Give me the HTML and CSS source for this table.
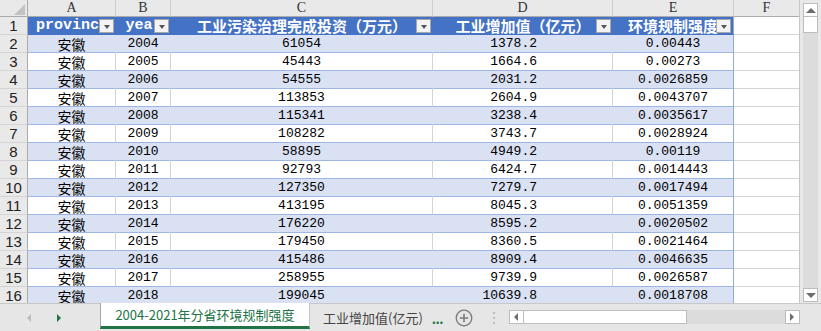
FILE: index.html
```html
<!DOCTYPE html>
<html lang="zh">
<head>
<meta charset="utf-8">
<title>Sheet</title>
<link rel="stylesheet" href="styles.css">
</head>
<body>
<div class="app">
  <div class="main">
    <div class="sheet">
      <div class="row colhead">
        <div class="corner"><span class="corner-tri"></span></div>
        <div class="ch">A</div><div class="ch">B</div><div class="ch">C</div><div class="ch">D</div><div class="ch">E</div><div class="ch">F</div>
      </div>
      <div class="row hdr">
        <div class="rh">1</div>
        <div class="th lat">province<span class="dd"></span></div>
        <div class="th lat">year<span class="dd"></span></div>
        <div class="th">工业污染治理完成投资（万元）<span class="dd"></span></div>
        <div class="th">工业增加值（亿元）<span class="dd"></span></div>
        <div class="th last">环境规制强度<span class="dd"></span></div>
        <div class="fc"></div>
      </div>
      <div class="row band"><div class="rh">2</div><div class="td cn">安徽</div><div class="td">2004</div><div class="td">61054</div><div class="td r">1378.2</div><div class="td last">0.00443</div><div class="fc"></div></div>
      <div class="row"><div class="rh">3</div><div class="td cn">安徽</div><div class="td">2005</div><div class="td">45443</div><div class="td r">1664.6</div><div class="td last">0.00273</div><div class="fc"></div></div>
      <div class="row band"><div class="rh">4</div><div class="td cn">安徽</div><div class="td">2006</div><div class="td">54555</div><div class="td r">2031.2</div><div class="td last">0.0026859</div><div class="fc"></div></div>
      <div class="row"><div class="rh">5</div><div class="td cn">安徽</div><div class="td">2007</div><div class="td">113853</div><div class="td r">2604.9</div><div class="td last">0.0043707</div><div class="fc"></div></div>
      <div class="row band"><div class="rh">6</div><div class="td cn">安徽</div><div class="td">2008</div><div class="td">115341</div><div class="td r">3238.4</div><div class="td last">0.0035617</div><div class="fc"></div></div>
      <div class="row"><div class="rh">7</div><div class="td cn">安徽</div><div class="td">2009</div><div class="td">108282</div><div class="td r">3743.7</div><div class="td last">0.0028924</div><div class="fc"></div></div>
      <div class="row band"><div class="rh">8</div><div class="td cn">安徽</div><div class="td">2010</div><div class="td">58895</div><div class="td r">4949.2</div><div class="td last">0.00119</div><div class="fc"></div></div>
      <div class="row"><div class="rh">9</div><div class="td cn">安徽</div><div class="td">2011</div><div class="td">92793</div><div class="td r">6424.7</div><div class="td last">0.0014443</div><div class="fc"></div></div>
      <div class="row band"><div class="rh">10</div><div class="td cn">安徽</div><div class="td">2012</div><div class="td">127350</div><div class="td r">7279.7</div><div class="td last">0.0017494</div><div class="fc"></div></div>
      <div class="row"><div class="rh">11</div><div class="td cn">安徽</div><div class="td">2013</div><div class="td">413195</div><div class="td r">8045.3</div><div class="td last">0.0051359</div><div class="fc"></div></div>
      <div class="row band"><div class="rh">12</div><div class="td cn">安徽</div><div class="td">2014</div><div class="td">176220</div><div class="td r">8595.2</div><div class="td last">0.0020502</div><div class="fc"></div></div>
      <div class="row"><div class="rh">13</div><div class="td cn">安徽</div><div class="td">2015</div><div class="td">179450</div><div class="td r">8360.5</div><div class="td last">0.0021464</div><div class="fc"></div></div>
      <div class="row band"><div class="rh">14</div><div class="td cn">安徽</div><div class="td">2016</div><div class="td">415486</div><div class="td r">8909.4</div><div class="td last">0.0046635</div><div class="fc"></div></div>
      <div class="row"><div class="rh">15</div><div class="td cn">安徽</div><div class="td">2017</div><div class="td">258955</div><div class="td r">9739.9</div><div class="td last">0.0026587</div><div class="fc"></div></div>
      <div class="row band"><div class="rh">16</div><div class="td cn">安徽</div><div class="td">2018</div><div class="td">199045</div><div class="td r">10639.8</div><div class="td last">0.0018708</div><div class="fc"></div></div>
    </div>
    <div class="vscroll">
      <div class="vtrack">
        <div class="sbtn up"><span class="tri-up"></span></div>
        <div class="vthumb"></div>
        <div class="vspace"></div>
        <div class="sbtn down"><span class="tri-down"></span></div>
      </div>
    </div>
  </div>
  <div class="tabbar">
    <div class="navs">
      <span class="nav-l"></span>
      <span class="nav-r"></span>
    </div>
    <div class="tab active">2004-2021年分省环境规制强度</div>
    <div class="tab">工业增加值(亿元)</div>
    <div class="more">...</div>
    <div class="addsheet">
      <svg width="18" height="18" viewBox="0 0 18 18"><circle cx="9" cy="9" r="7.8" fill="none" stroke="#7a7a7a" stroke-width="1.3"/><path d="M9 4.8v8.4M4.8 9h8.4" stroke="#7a7a7a" stroke-width="1.6"/></svg>
    </div>
    <div class="vdots"><span></span><span></span><span></span></div>
    <div class="hscroll">
      <div class="sbtn left"><span class="tri-left"></span></div>
      <div class="hthumb"></div>
      <div class="hspace"></div>
      <div class="sbtn right"><span class="tri-right"></span></div>
    </div>
  </div>
</div>
</body>
</html>
```
FILE: styles.css
```css
* { box-sizing: border-box; }
html, body { margin: 0; padding: 0; }
body {
  width: 821px;
  height: 331px;
  overflow: hidden;
  background: #e6e6e6;
  font-family: "Liberation Mono", "Noto Sans CJK SC", monospace;
}
.app {
  width: 821px;
  height: 331px;
  display: flex;
  flex-direction: column;
}
.main {
  height: 303px;
  display: flex;
  flex: 0 0 303px;
}
.sheet {
  width: 800px;
  height: 303px;
  overflow: hidden;
  background: #fff;
  display: flex;
  flex-direction: column;
  border-right: 1px solid #c6c6c6;
}
.row {
  display: grid;
  grid-template-columns: 28px 88px 55px 262px 180px 121px 66px;
  height: 18px;
  flex: 0 0 18px;
  line-height: 1;
}
.row > div {
  display: flex;
  align-items: center;
  justify-content: center;
  white-space: nowrap;
  position: relative;
  line-height: 1;
}
.colhead { height: 17px; flex-basis: 17px; }
.colhead > div {
  background: #e9e9e9;
  border-bottom: 1px solid #ababab;
  border-right: 1px solid #cfcfcf;
  color: #333;
  font-family: "Liberation Serif", serif;
  font-size: 14px;
}
.corner { border-right-color: #ababab !important; }
.corner-tri {
  position: absolute;
  right: 2px;
  bottom: 1px;
  width: 11px;
  height: 11px;
  background: #c3c3c3;
  clip-path: polygon(100% 0, 100% 100%, 0 100%);
}
.rh {
  background: #e9e9e9;
  border-right: 1px solid #ababab;
  border-bottom: 1px solid #d4d4d4;
  color: #222;
  font-family: "Liberation Sans", sans-serif;
  font-size: 15px;
}
.hdr .th {
  background: #4472c4;
  color: #fff;
  font-weight: bold;
  font-size: 15px;
  font-family: "Noto Sans CJK SC", sans-serif;
  border-bottom: 1px solid #4472c4;
}
.hdr .th.lat {
  font-family: "Liberation Mono", monospace;
  font-size: 15px;
}
.dd {
  position: absolute;
  right: 2px;
  top: 2px;
  width: 15px;
  height: 14px;
  background: #f3f3f3;
  border: 1px solid #a8a8a8;
  display: flex;
  align-items: center;
  justify-content: center;
}
.dd::after {
  content: "";
  border-top: 4px solid #555;
  border-left: 3.5px solid transparent;
  border-right: 3.5px solid transparent;
  margin-top: 1px;
}
.td {
  font-size: 13px;
  color: #000;
  border-bottom: 1px solid #9fb6e0;
  border-right: 1px solid #d4d4d4;
}
.td.cn {
  font-family: "Noto Sans CJK SC", sans-serif;
  font-size: 14px;
}
.td.r { justify-content: flex-end !important; padding-right: 75px; }
.band .td { background: #d9e1f2; border-right-color: #d9e1f2; }
.td.last, .th.last { border-right: 1px solid #8ea9db; }
.band .td.last { border-right-color: #8ea9db; }
.fc {
  background: #fff;
  border-bottom: 1px solid #d4d4d4;
  border-right: 1px solid #d4d4d4;
}
.vscroll {
  width: 21px;
  height: 303px;
  background: #e9e9e9;
  padding: 3px 3px 1px 3px;
}
.vtrack {
  height: 100%;
  background: #dcdcdc;
  display: flex;
  flex-direction: column;
}
.sbtn {
  background: #fff;
  border: 1px solid #bdbdbd;
  display: flex;
  align-items: center;
  justify-content: center;
  flex: 0 0 auto;
}
.sbtn.up, .sbtn.down { height: 14px; }
.vthumb { height: 16px; background: #fff; border: 1px solid #bdbdbd; border-top: none; }
.vspace { flex: 1; }
.tri-up { border-bottom: 5px solid #6d6d6d; border-left: 5px solid transparent; border-right: 5px solid transparent; }
.tri-down { border-top: 5px solid #6d6d6d; border-left: 5px solid transparent; border-right: 5px solid transparent; }
.tri-left { border-right: 4px solid #6d6d6d; border-top: 4px solid transparent; border-bottom: 4px solid transparent; }
.tri-right { border-left: 4px solid #6d6d6d; border-top: 4px solid transparent; border-bottom: 4px solid transparent; }

.tabbar {
  flex: 0 0 28px;
  height: 28px;
  background: #e6e6e6;
  border-top: 1px solid #c8c8c8;
  display: flex;
  align-items: stretch;
  font-family: "Noto Sans CJK SC", sans-serif;
  font-size: 13px;
}
.navs {
  width: 100px;
  flex: 0 0 100px;
  display: flex;
  align-items: center;
  padding-left: 27px;
  gap: 26px;
}
.nav-l { border-right: 4px solid #bcbcbc; border-top: 4px solid transparent; border-bottom: 4px solid transparent; }
.nav-r { border-left: 4px solid #217346; border-top: 4px solid transparent; border-bottom: 4px solid transparent; }
.tab {
  display: flex;
  align-items: center;
  justify-content: center;
  color: #444;
  padding: 0 12px 0 13px;
  line-height: 1;
}
.tab.active {
  width: 210px;
  flex: 0 0 210px;
  margin-top: -1px;
  background: #fff;
  color: #217346;
  border-left: 1px solid #a6a6a6;
  border-right: 1px solid #c4c4c4;
  border-bottom: 3px solid #217346;
  margin-bottom: 2px;
  padding: 0;
}
.more {
  color: #217346;
  font-weight: bold;
  display: flex;
  align-items: flex-end;
  padding-bottom: 6px;
  line-height: 1;
  margin-left: -3px;
  letter-spacing: -0.5px;
}
.addsheet {
  display: flex;
  align-items: center;
  margin-left: 12px;
}
.vdots {
  display: flex;
  flex-direction: column;
  justify-content: center;
  gap: 3px;
  margin-left: 20px;
}
.vdots span { width: 2px; height: 2px; background: #bdbdbd; }
.hscroll {
  margin-left: 14px;
  width: 291px;
  flex: 0 0 291px;
  height: 14px;
  margin-top: 6px;
  background: #dcdcdc;
  display: flex;
}
.sbtn.left, .sbtn.right { width: 15px; height: 14px; }
.hthumb { width: 163px; height: 14px; background: #fff; border: 1px solid #bdbdbd; border-left: none; }
.hspace { flex: 1; }
```
